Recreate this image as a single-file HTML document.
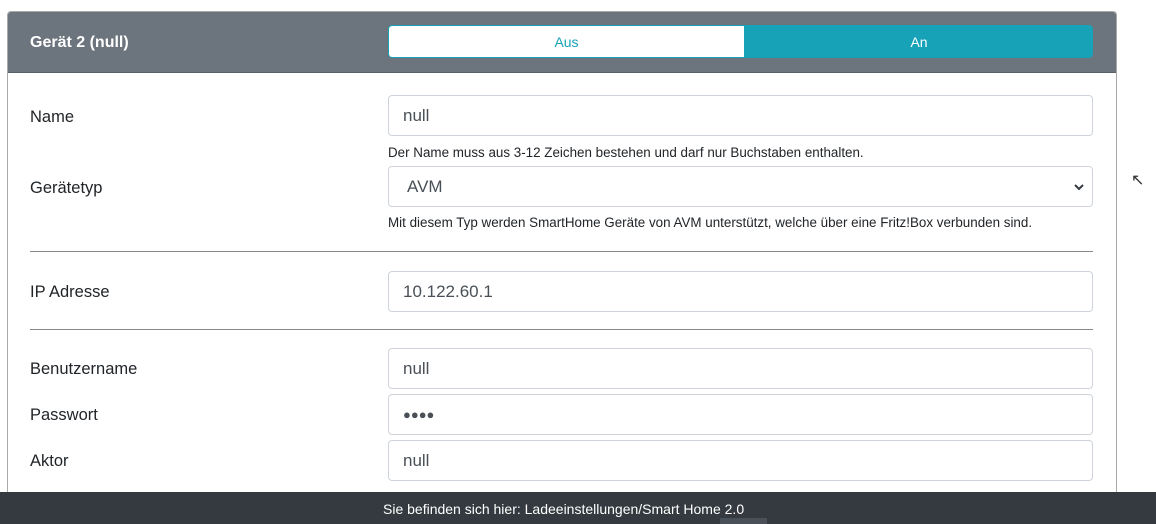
<!DOCTYPE html>
<html><head><meta charset="utf-8"><style>
body{margin:0;width:1156px;height:524px;overflow:hidden;background:#fff;font-family:"Liberation Sans",sans-serif;position:relative}
.a{position:absolute}
.card{left:7px;top:11px;width:1110px;height:500px;border:1px solid #aaa;border-radius:4px;box-sizing:border-box;overflow:hidden}
.hd{left:0;top:0;width:1110px;height:60px;background:#6c757d;border-bottom:1px solid #5a6168}
.lbl{left:30px;font-size:16.5px;color:#212529}
.inp{left:388px;width:705px;height:41px;border:1px solid #ced4da;border-radius:4px;box-sizing:border-box;font-size:17px;color:#495057;padding:0 0 0 14px;line-height:39px}
.help{left:388px;font-size:13.4px;color:#212529}
.hr{left:30px;width:1063px;height:1px;background:#888}
</style></head><body>
<div class="a card"><div class="a hd"></div></div>
<div class="a" style="left:30px;top:34px;font-size:16px;font-weight:bold;color:#fff">Gerät 2 (null)</div>
<div class="a" style="left:388px;top:25px;width:705px;height:33px;border-radius:4px;overflow:hidden;border:1px solid #17a2b8;box-sizing:border-box">
<div class="a" style="left:0;top:0;width:355px;height:33px;background:#fff;color:#17a2b8;text-align:center;line-height:33px;font-size:14px">Aus</div>
<div class="a" style="left:355px;top:0;width:350px;height:33px;background:#17a2b8;color:#fff;text-align:center;line-height:33px;font-size:14px">An</div></div>
<div class="a lbl" style="top:108px">Name</div>
<div class="a inp" style="top:95px">null</div>
<div class="a help" style="top:145px">Der Name muss aus 3-12 Zeichen bestehen und darf nur Buchstaben enthalten.</div>
<div class="a lbl" style="top:179px">Gerätetyp</div>
<div class="a inp" style="top:166px;padding-left:18px">AVM<svg class="a" style="right:8px;top:16px" width="10" height="8" viewBox="0 0 10 8"><path d="M1 2l4 4 4-4" fill="none" stroke="#343a40" stroke-width="2"/></svg></div>
<div class="a help" style="top:215px">Mit diesem Typ werden SmartHome Geräte von AVM unterstützt, welche über eine Fritz!Box verbunden sind.</div>
<div class="a hr" style="top:251px"></div>
<div class="a lbl" style="top:283px">IP Adresse</div>
<div class="a inp" style="top:271px">10.122.60.1</div>
<div class="a hr" style="top:329px"></div>
<div class="a lbl" style="top:360px">Benutzername</div>
<div class="a inp" style="top:348px">null</div>
<div class="a lbl" style="top:406px">Passwort</div>
<div class="a inp" style="top:394px;font-size:13px">●●●●</div>
<div class="a lbl" style="top:452px">Aktor</div>
<div class="a inp" style="top:440px">null</div>
<div class="a" style="left:1131px;top:170px;font-size:16px;color:#333">&#8598;</div>
<div class="a" style="left:0;top:492px;width:1156px;height:32px;background:#343a40"></div>
<div class="a" style="left:383px;top:501px;width:360px;font-size:14px;color:#fff;white-space:nowrap">Sie befinden sich hier: Ladeeinstellungen/Smart Home 2.0</div>
<div class="a" style="left:720px;top:518px;width:47px;height:6px;background:#4a5057"></div>
</body></html>
